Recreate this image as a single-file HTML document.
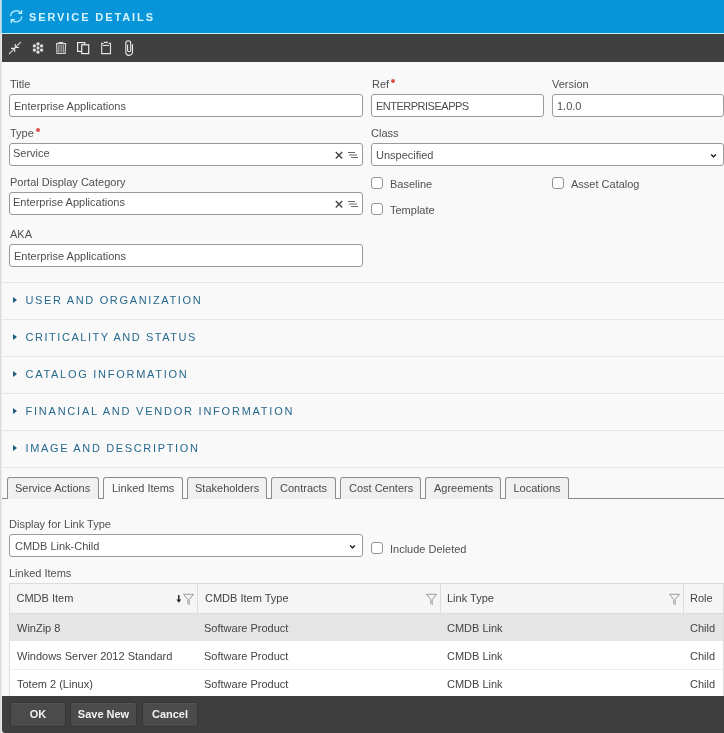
<!DOCTYPE html>
<html><head><meta charset="utf-8">
<style>
*{box-sizing:border-box;margin:0;padding:0}
html,body{width:724px;height:733px;overflow:hidden;background:#f9f9f9;font-family:"Liberation Sans",sans-serif;font-size:11px;color:#444}
.a{position:absolute}
.t{position:absolute;white-space:nowrap;line-height:13px;height:13px;color:#4e4e4e}
.lbl{color:#505050;margin-left:1px}
.inp{position:absolute;background:#fff;border:1px solid #9a9a9a;border-radius:3px;height:23px}
.cb{position:absolute;width:12px;height:12px;border:1px solid #939393;border-radius:3px;background:#fff}
.req{position:absolute;width:4px;height:4px;border-radius:2px;background:#d9534f}
.sep{position:absolute;left:2px;width:722px;height:1px;background:#e6e6e6}
.sec{position:absolute;left:25.5px;color:#27698c;letter-spacing:1.65px;line-height:13px;white-space:nowrap}
.tri{position:absolute;left:13px;width:0;height:0;border-top:3px solid transparent;border-bottom:3px solid transparent;border-left:4px solid #1d5d80}
.tab{position:absolute;top:477px;height:22px;border:1px solid #8c8c8c;border-bottom:none;border-radius:3px 3px 0 0;background:#f0f0f0;color:#4a4a4a;line-height:13px;white-space:nowrap}
.tab span{position:absolute;top:4px;left:8px}
.th{position:absolute;top:0;height:13px;line-height:13px;color:#444;white-space:nowrap}
.td{position:absolute;line-height:13px;color:#444;white-space:nowrap}
.btn{position:absolute;top:702px;height:25px;background:#4b4b4b;border:1px solid #363636;box-shadow:inset 0 1px 0 #575757;border-radius:3px;color:#f2f2f2;font-weight:bold;text-align:center;line-height:23px;font-size:11px}
#root{position:absolute;left:0;top:0;width:724px;height:733px;overflow:hidden;will-change:transform;background:#f9f9f9}
.xi{position:absolute}
</style></head><body><div id="root">
<!-- left strip -->
<div class="a" style="left:0;top:0;width:1px;height:733px;background:#dadada"></div><div class="a" style="left:1px;top:0;width:1px;height:733px;background:#ececec"></div>
<!-- header -->
<div class="a" style="left:1px;top:0;width:723px;height:33px;background:#0794d8"></div>
<div class="a" style="left:1px;top:0;width:1px;height:33px;background:#8fd6f5"></div>
<div class="a" style="left:1px;top:33px;width:723px;height:1px;background:#c4f0ff"></div>
<svg class="a" style="left:0.4px;top:0.3px" width="30" height="30" viewBox="0 0 30 30">
 <g fill="none" stroke="#a2e4ff" stroke-width="1.35">
 <path d="M10.7 16.3 A5.5 5.5 0 0 1 20.96 13.55"/>
 <path d="M21.6 10.2 V13.4 H18.2" stroke="#bdeeff"/>
 <path d="M21.7 16.3 A5.5 5.5 0 0 1 11.44 19.05"/>
 <path d="M11.3 23 V19.6 H14.8" stroke="#bdeeff"/>
 </g>
</svg>
<div class="t" style="left:29px;top:11px;color:#d2f4ff;font-weight:bold;letter-spacing:1.9px">SERVICE DETAILS</div>
<!-- toolbar -->
<div class="a" style="left:2px;top:34px;width:722px;height:28px;background:#404040"></div>
<svg class="a" style="left:0;top:34px" width="140" height="28" viewBox="0 34 140 28">
 <g stroke="#e8e8e8" fill="none" stroke-width="1.1">
  <path d="M9 54 L14.3 48.7" stroke-opacity="0.85"/>
  <path d="M11 48.4 H14.7 V52"/>
  <path d="M20.8 42 L15.7 47.1" stroke-opacity="0.85"/>
  <path d="M15.3 44 V47.5 H19"/>
 </g>
 <g stroke="#8a8a8a" stroke-width="0.9"><path d="M38 45 V51 M35.4 46.5 L40.6 49.5 M35.4 49.5 L40.6 46.5"/></g>
 <g fill="#dcdcdc">
  <g transform="rotate(0 38 48)"><path d="M36.2 43.2 L38 42 L39.8 43.2 L39 45.4 L37 45.4 Z"/></g>
  <g transform="rotate(60 38 48)"><path d="M36.2 43.2 L38 42 L39.8 43.2 L39 45.4 L37 45.4 Z"/></g>
  <g transform="rotate(120 38 48)"><path d="M36.2 43.2 L38 42 L39.8 43.2 L39 45.4 L37 45.4 Z"/></g>
  <g transform="rotate(180 38 48)"><path d="M36.2 43.2 L38 42 L39.8 43.2 L39 45.4 L37 45.4 Z"/></g>
  <g transform="rotate(240 38 48)"><path d="M36.2 43.2 L38 42 L39.8 43.2 L39 45.4 L37 45.4 Z"/></g>
  <g transform="rotate(300 38 48)"><path d="M36.2 43.2 L38 42 L39.8 43.2 L39 45.4 L37 45.4 Z"/></g>
 </g>
 <circle cx="38" cy="48" r="1.2" fill="#f4f4f4"/>
 <g stroke="#d8d8d8" fill="none" stroke-width="1.1">
  <path d="M56.6 43.6 H65.6 L65.2 53.5 H57 Z"/>
  <path d="M58.4 42.5 H63.2"/>
 </g>
 <g stroke="#a8a8a8" stroke-width="1.3">
  <path d="M58.8 45 V52.5 M61.1 45 V52.5 M63.3 45 V52.5"/>
 </g>
 <g stroke="#f2f2f2" fill="none" stroke-width="1.15">
  <rect x="77.6" y="42.6" width="7.2" height="8.8"/>
  <rect x="81.7" y="44.8" width="7" height="8.8" fill="#404040"/>
 </g>
 <g stroke="#e2e2e2" fill="none" stroke-width="1.1">
  <path d="M103.5 43.4 H101.7 V53.6 H110.5 V43.4 H108.6"/>
  <path d="M104 42.4 H108" stroke-width="1.3"/>
  <path d="M102.8 45.4 H109.2"/>
 </g>
 <g stroke="#ececec" fill="none" stroke-width="1.1">
  <path d="M132.5 44.2 V52 A3.35 3.35 0 0 1 125.8 52 V43.2 A2.45 2.45 0 0 1 130.7 43.2 V50.2 A1.55 1.55 0 0 1 127.6 50.2 V44.6"/>
 </g>
</svg>

<!-- form labels -->
<div class="t lbl" style="left:9px;top:78px">Title</div>
<div class="t lbl" style="left:371px;top:78px">Ref</div>
<div class="req" style="left:391px;top:79px"></div>
<div class="t lbl" style="left:551px;top:78px">Version</div>
<div class="t lbl" style="left:9px;top:127px">Type</div>
<div class="req" style="left:36px;top:128px"></div>
<div class="t lbl" style="left:370px;top:127px">Class</div>
<div class="t lbl" style="left:9px;top:176px">Portal Display Category</div>
<div class="t lbl" style="left:9px;top:228px">AKA</div>

<!-- inputs -->
<div class="inp" style="left:9px;top:94px;width:354px"><div class="t" style="left:4px;top:5px">Enterprise Applications</div></div>
<div class="inp" style="left:371px;top:94px;width:173px"><div class="t" style="left:4px;top:5px;letter-spacing:-0.5px">ENTERPRISEAPPS</div></div>
<div class="inp" style="left:552px;top:94px;width:172px"><div class="t" style="left:4px;top:5px">1.0.0</div></div>
<div class="inp" style="left:9px;top:143px;width:354px"><div class="t" style="left:3px;top:3px">Service</div></div>
<div class="inp" style="left:371px;top:143px;width:353px"><div class="t" style="left:4px;top:5px">Unspecified</div></div>
<div class="inp" style="left:9px;top:192px;width:354px"><div class="t" style="left:3px;top:3px">Enterprise Applications</div></div>
<div class="inp" style="left:9px;top:244px;width:354px"><div class="t" style="left:4px;top:5px">Enterprise Applications</div></div>

<!-- checkboxes -->
<div class="cb" style="left:371px;top:177px"></div>
<div class="t lbl" style="left:389px;top:178px">Baseline</div>
<div class="cb" style="left:371px;top:203px"></div>
<div class="t lbl" style="left:389px;top:204px">Template</div>
<div class="cb" style="left:552px;top:177px"></div>
<div class="t lbl" style="left:570px;top:178px">Asset Catalog</div>

<!-- sections -->
<div class="sep" style="top:282px"></div>
<div class="sep" style="top:319px"></div>
<div class="sep" style="top:356px"></div>
<div class="sep" style="top:393px"></div>
<div class="sep" style="top:430px"></div>
<div class="sep" style="top:467px"></div>
<div class="tri" style="top:297px"></div><div class="sec" style="top:294px">USER AND ORGANIZATION</div>
<div class="tri" style="top:334px"></div><div class="sec" style="top:331px;letter-spacing:1.54px">CRITICALITY AND STATUS</div>
<div class="tri" style="top:371px"></div><div class="sec" style="top:368px;letter-spacing:1.73px">CATALOG INFORMATION</div>
<div class="tri" style="top:408px"></div><div class="sec" style="top:405px;letter-spacing:1.77px">FINANCIAL AND VENDOR INFORMATION</div>
<div class="tri" style="top:445px"></div><div class="sec" style="top:442px">IMAGE AND DESCRIPTION</div>

<!-- tabs -->
<div class="a" style="left:2px;top:498px;width:722px;height:1px;background:#8c8c8c"></div>
<div class="tab" style="left:7px;width:92px"><span style="left:7px">Service Actions</span></div>
<div class="tab" style="left:103px;width:80px;background:#f9f9f9"><span>Linked Items</span></div>
<div class="tab" style="left:187px;width:80px"><span style="left:7px">Stakeholders</span></div>
<div class="tab" style="left:271px;width:65px"><span>Contracts</span></div>
<div class="tab" style="left:340px;width:81px"><span>Cost Centers</span></div>
<div class="tab" style="left:425px;width:76px"><span>Agreements</span></div>
<div class="tab" style="left:505px;width:64px"><span style="left:7.5px">Locations</span></div>

<!-- link type -->
<div class="t lbl" style="left:8px;top:518px">Display for Link Type</div>
<div class="inp" style="left:9px;top:534px;width:354px"><div class="t" style="left:5px;top:5px">CMDB Link-Child</div></div>
<div class="cb" style="left:371px;top:542px"></div>
<div class="t lbl" style="left:389px;top:543px">Include Deleted</div>
<div class="t lbl" style="left:8px;top:567px">Linked Items</div>

<!-- table -->
<div class="a" style="left:9px;top:583px;width:715px;height:150px;border:1px solid #dcdcdc;background:#fff"></div>
<div class="a" style="left:10px;top:584px;width:713px;height:29px;background:#f5f5f5"></div>
<div class="a" style="left:10px;top:613px;width:713px;height:1px;background:#dcdcdc"></div>
<div class="a" style="left:197px;top:584px;width:1px;height:29px;background:#dcdcdc"></div>
<div class="a" style="left:440px;top:584px;width:1px;height:29px;background:#dcdcdc"></div>
<div class="a" style="left:683px;top:584px;width:1px;height:29px;background:#dcdcdc"></div>
<div class="a" style="left:10px;top:614px;width:713px;height:27px;background:#e5e5e5"></div>
<div class="a" style="left:10px;top:669px;width:713px;height:1px;background:#ededed"></div>
<div class="th" style="left:16.5px;top:592px">CMDB Item</div>
<div class="th" style="left:205px;top:592px">CMDB Item Type</div>
<div class="th" style="left:447px;top:592px">Link Type</div>
<div class="th" style="left:690px;top:592px">Role</div>
<div class="td" style="left:17px;top:622px">WinZip 8</div>
<div class="td" style="left:204px;top:622px">Software Product</div>
<div class="td" style="left:447px;top:622px">CMDB Link</div>
<div class="td" style="left:690px;top:622px">Child</div>
<div class="td" style="left:17px;top:650px">Windows Server 2012 Standard</div>
<div class="td" style="left:204px;top:650px">Software Product</div>
<div class="td" style="left:447px;top:650px">CMDB Link</div>
<div class="td" style="left:690px;top:650px">Child</div>
<div class="td" style="left:17px;top:678px">Totem 2 (Linux)</div>
<div class="td" style="left:204px;top:678px">Software Product</div>
<div class="td" style="left:447px;top:678px">CMDB Link</div>
<div class="td" style="left:690px;top:678px">Child</div>

<svg class="xi" style="left:0;top:0" width="724" height="733" viewBox="0 0 724 733">
 <g fill="none" stroke="#9a9a9a" stroke-width="1">
  <path d="M183.5 594.3 H193.5 L189.2 599.5 V605 M183.5 594.3 L187.8 599.5 V604"/>
  <path d="M426.5 594.3 H436.5 L432.2 599.5 V605 M426.5 594.3 L430.8 599.5 V604"/>
  <path d="M669.5 594.3 H679.5 L675.2 599.5 V605 M669.5 594.3 L673.8 599.5 V604"/>
 </g>
 <path d="M178.8 595 V601" stroke="#222" stroke-width="1.4"/>
 <path d="M176.4 599.6 L178.8 602.8 L181.2 599.6 Z" fill="#222"/>
</svg>
<!-- footer -->
<div class="a" style="left:2px;top:696px;width:722px;height:37px;background:#3e3e3e;border-bottom-left-radius:3px"></div>
<div class="btn" style="left:10px;width:56px">OK</div>
<div class="btn" style="left:70px;width:67px">Save New</div>
<div class="btn" style="left:142px;width:56px">Cancel</div>
<svg class="xi" style="left:0;top:0" width="724" height="733" viewBox="0 0 724 733">
 <g stroke="#444" stroke-width="1.4" fill="none">
  <path d="M335.8 152 L342.2 158.4 M342.2 152 L335.8 158.4"/>
  <path d="M335.8 201 L342.2 207.4 M342.2 201 L335.8 207.4"/>
 </g>
 <g stroke="#6a6a6a" stroke-width="1" fill="none">
  <path d="M348 152.5 H355 M349 155 H357 M351 157.5 H358"/>
  <path d="M348 201.5 H355 M349 204 H357 M351 206.5 H358"/>
 </g>
 <g stroke="#111" stroke-width="1.35" fill="none">
  <path d="M711.2 154.6 L713.5 156.9 L715.8 154.6"/>
  <path d="M350.2 545.6 L352.5 547.9 L354.8 545.6"/>
 </g>
</svg>
</div></body></html>
